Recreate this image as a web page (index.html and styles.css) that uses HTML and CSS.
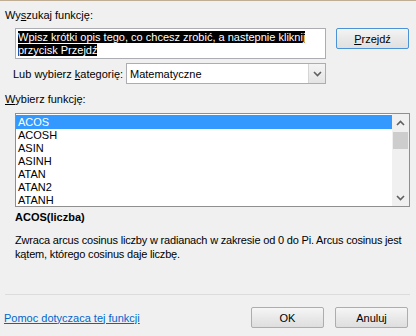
FILE: index.html
```html
<!DOCTYPE html>
<html>
    <head>
        <title>Wstaw funkcję</title>
        <meta charset="UTF-8">
        <link rel="stylesheet" href="styles.css">
    </head>
    <body>
        <div class="dialog">
            <div class="caption">Wy<u>s</u>zukaj funkcję:</div>
            <div class="search-row">
                <div class="search-box">
                    <span class="sel">Wpisz krótki opis tego, co chcesz zrobić, a nastepnie kliknij</span><br>
                    <span class="sel">przycisk Przejdź</span>
                </div>
                <div class="button default"><u>P</u>rzejdź</div>
            </div>
            <div class="category-row">
                <span class="category-label">Lub wybierz <u>k</u>ategorię:</span>
                <div class="combo">
                    <span class="combo-text">Matematyczne</span>
                    <span class="combo-drop">
                        <svg width="9" height="6" viewBox="0 0 9 6"><path d="M1 1 L4.5 4.5 L8 1" fill="none" stroke="#606060" stroke-width="1.6"/></svg>
                    </span>
                </div>
            </div>
            <div class="caption second"><u>W</u>ybierz funkcję:</div>
            <div class="listbox">
                <div class="items">
                    <div class="item selected">ACOS</div>
                    <div class="item">ACOSH</div>
                    <div class="item">ASIN</div>
                    <div class="item">ASINH</div>
                    <div class="item">ATAN</div>
                    <div class="item">ATAN2</div>
                    <div class="item">ATANH</div>
                </div>
                <div class="scrollbar">
                    <span class="arrow">
                        <svg width="9" height="6" viewBox="0 0 9 6"><path d="M1 5 L4.5 1.5 L8 5" fill="none" stroke="#606060" stroke-width="1.6"/></svg>
                    </span>
                    <div class="track"><div class="thumb"></div></div>
                    <span class="arrow">
                        <svg width="9" height="6" viewBox="0 0 9 6"><path d="M1 1 L4.5 4.5 L8 1" fill="none" stroke="#606060" stroke-width="1.6"/></svg>
                    </span>
                </div>
            </div>
            <div class="signature">ACOS(liczba)</div>
            <div class="description">Zwraca arcus cosinus liczby w radianach w zakresie od 0 do Pi. Arcus cosinus jest<br>kątem, którego cosinus daje liczbę.</div>
            <div class="spacer"></div>
            <div class="separator"></div>
            <div class="footer">
                <a class="help" href="#">Pomoc dotyczaca tej funkcji</a>
                <div class="buttons">
                    <div class="button">OK</div>
                    <div class="button">Anuluj</div>
                </div>
            </div>
        </div>
    </body>
</html>
```

FILE: styles.css
```css
body{
    margin:0px;
    background-color: #f0f0f0;
    font-family: "Liberation Sans", Arial, sans-serif;
    font-size: 11px;
    color: #000000;
}
.dialog{
    width: 416px;
    height: 336px;
    box-sizing: border-box;
    border-top: 1px solid #bfae94;
    display: flex;
    flex-direction: column;
    white-space: nowrap;
}
.caption{
    margin-top: 7px;
    margin-left: 5px;
    line-height: 15px;
}
.caption.second{
    margin-top: 8px;
}
.search-row{
    display: flex;
    align-items: flex-start;
    margin-top: 5px;
    margin-left: 15px;
    gap: 10px;
}
.search-box{
    width: 311px;
    height: 31px;
    box-sizing: border-box;
    background: #ffffff;
    border: 1px solid #abadb3;
    padding: 2px 0px 0px 2px;
    line-height: 13px;
}
.sel{
    background: #000000;
    color: #ffffff;
}
.button{
    width: 73px;
    height: 21px;
    box-sizing: border-box;
    border: 1px solid #adadad;
    border-radius: 2px;
    background: linear-gradient(#f6f6f6, #e9e9e9 50%, #dedede);
    display: flex;
    align-items: center;
    justify-content: center;
}
.button.default{
    border-color: #4c93d6;
    background: linear-gradient(#f4f4f4, #e9e9e9 50%, #e0e0e0);
}
.category-row{
    display: flex;
    align-items: center;
    margin-top: 4px;
    margin-left: 13px;
}
.category-label{
    width: 113px;
}
.combo{
    width: 200px;
    height: 21px;
    box-sizing: border-box;
    border: 1px solid #abadb3;
    background: #ffffff;
    display: flex;
    align-items: center;
}
.combo-text{
    flex: 1;
    padding-left: 3px;
}
.combo-drop{
    width: 17px;
    height: 19px;
    box-sizing: border-box;
    border-left: 1px solid #d5d5d5;
    background: linear-gradient(#f4f4f4, #e4e4e4);
    display: flex;
    align-items: center;
    justify-content: center;
}
.listbox{
    margin-top: 6px;
    margin-left: 15px;
    width: 395px;
    height: 94px;
    box-sizing: border-box;
    border: 1px solid #8f8f8f;
    background: #ffffff;
    display: flex;
}
.items{
    flex: 1;
    padding-top: 1px;
}
.item{
    height: 13px;
    line-height: 13px;
    padding-left: 2px;
}
.item.selected{
    background: #3399ff;
    color: #ffffff;
    height: 14px;
    line-height: 14px;
}
.scrollbar{
    width: 17px;
    background: #f0f0f0;
    display: flex;
    flex-direction: column;
}
.arrow{
    height: 17px;
    display: flex;
    align-items: center;
    justify-content: center;
}
.track{
    flex: 1;
}
.thumb{
    margin: 1px 1px 0px 1px;
    height: 17px;
    background: #cdcdcd;
}
.signature{
    margin-top: 3px;
    margin-left: 15px;
    line-height: 15px;
    font-weight: bold;
}
.description{
    margin-top: 8px;
    margin-left: 15px;
    line-height: 14px;
    letter-spacing: -0.18px;
}
.spacer{
    flex: 1;
}
.separator{
    margin: 0px 6px 0px 5px;
    height: 1px;
    background: #dcdcdc;
}
.footer{
    display: flex;
    align-items: center;
    justify-content: space-between;
    margin-top: 12px;
    margin-bottom: 8px;
    padding-left: 4px;
    padding-right: 8px;
}
.help{
    color: #0066cc;
}
.buttons{
    display: flex;
    gap: 11px;
}
```
